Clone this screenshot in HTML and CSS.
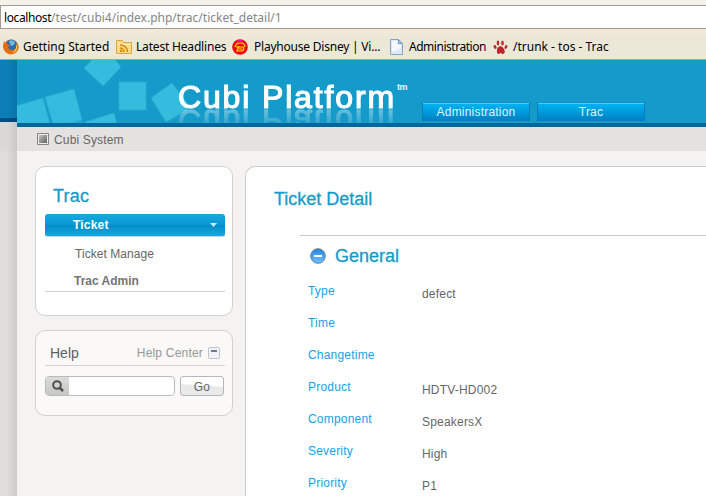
FILE: index.html
```html
<!DOCTYPE html>
<html lang="en">
<head>
<meta charset="utf-8">
<title>Cubi Platform</title>
<link rel="stylesheet" href="styles.css">
</head>
<body>
<div class="browser">
  <div class="url"><b>localhost</b><span>/test/cubi4/index.php/trac/ticket_detail/1</span></div>
  <nav class="bookmarks">
    <a class="bm bm-start"><svg width="16" height="16" viewBox="0 0 16 16"><circle cx="8" cy="8" r="7.5" fill="#e27a16"/><circle cx="8.3" cy="6.3" r="5.8" fill="#2b6cab"/><path d="M6 2q3-2 6 1l-1 3-3 1z" fill="#72b9dc"/><path d="M1 2l1 2 2-1 0 2 3 1-2 2 1 2q3 2 6 0 3-2 2-6 3 4 0 8-4 4-9 2-5-2-5-7z" fill="#e66b14"/><path d="M13 5q3 4-1 8l-3 1q5-3 4-9z" fill="#ffc84a"/></svg><span>Getting Started</span></a>
    <a class="bm bm-news"><svg width="16" height="16" viewBox="0 0 16 16"><path d="M.5 14.500V1.500h6l1 2h8v11z" fill="#fbdc83" stroke="#dba63d"/><path d="M1.500 5.500h13" stroke="#fff0b8"/><g fill="none" stroke="#d9861b" stroke-width="1.500"><path d="M4 9q3.500 0 4 4M4 6q7 0 7.500 7"/></g><circle cx="5" cy="12" r="1.200" fill="#d9861b"/></svg><span>Latest Headlines</span></a>
    <a class="bm bm-play"><svg width="16" height="16" viewBox="0 0 16 16"><circle cx="8" cy="8" r="7.800" fill="#ed0710"/><path d="M5 3l3-2 3 2" fill="none" stroke="#ed1bb0" stroke-width="1.500"/><path d="M3 8q1-4 5-4 5 0 5 4M4 8h7q2 2-1 4H5l2-5M7 10h3" fill="none" stroke="#ffe600" stroke-width="1.200"/></svg><span>Playhouse Disney | Vi...</span></a>
    <a class="bm bm-admin"><svg width="13" height="16" viewBox="0 0 13 16"><path d="M.5.500h8l4 4v11H.500z" fill="#dce9f9" stroke="#8ba3c2"/><path d="M2 2h5v4h4v3L2 13z" fill="#f5f9ff"/><path d="M8.500.500v4h4z" fill="#a9c9ec" stroke="#7e9cc0"/></svg><span>Administration</span></a>
    <a class="bm bm-trunk"><svg width="15" height="16" viewBox="0 0 15 16" fill="#bd252c"><path d="M4 11q0-3 3.500-4 3 1 4 4 1 4-2 4l-2-1-2 1q-2 0-1.500-4z"/><ellipse cx="5" cy="4" rx="1.300" ry="2.400"/><ellipse cx="9.500" cy="4" rx="1.300" ry="2.600"/><ellipse cx="2" cy="8" rx="1.400" ry="2" transform="rotate(-25 2 8)"/><ellipse cx="13" cy="8" rx="1.300" ry="2" transform="rotate(25 13 8)"/></svg><span>/trunk - tos - Trac</span></a>
  </nav>
</div>
<div class="page">
  <div class="gutter"></div>
  <div class="site">
    <header>
      <svg class="cubes" width="170" height="63" viewBox="0 0 170 63" fill="#33bcdd" stroke="#27b0d3" stroke-width=".8"><path d="M-1 46 26 38 33 64H-1zM28 37 57 29 65 60 37 68zM33 64l32-2 1 2zM68 62 97 53 100 64H68zM67 8 78-3H96L104 7 86 26zM102 22h27v28H102zM134 38 155 23 174 48 149 62z"/></svg>
      <div class="logo">Cubi Platform</div><sup>tm</sup>
      <nav class="tabs"><a>Administration</a><a>Trac</a></nav>
    </header>
    <div class="crumb"><svg width="12" height="12" viewBox="0 0 12 12"><defs><linearGradient id="sq" x2="1" y2="1"><stop stop-color="#c5c5c5"/><stop offset="1" stop-color="#606060"/></linearGradient></defs><path d="M.5.500h11v11H.500z" fill="#ecebea" stroke="#858585"/><path d="M2 2h8v8H2z" fill="url(#sq)"/></svg><span>Cubi System</span></div>
    <div class="content">
      <aside>
        <section class="panel menu">
          <h2>Trac</h2>
          <a class="active"><span>Ticket</span><svg width="7" height="4" viewBox="0 0 7 4"><path d="M0 0h7L3.500 4z" fill="#c9edfc"/></svg></a>
          <a class="sub">Ticket Manage</a>
          <a class="group">Trac Admin</a>
        </section>
        <section class="panel help">
          <div class="help-head"><h3>Help</h3><span>Help Center</span><svg width="12" height="12" viewBox="0 0 12 12"><rect x=".5" y=".5" width="11" height="11" rx="1.200" fill="#f0f3fa" stroke="#bfc2c8"/><path d="M3 3h6v2H3z" fill="#777c84"/></svg></div>
          <div class="search"><div class="field"><i><svg width="12" height="12" viewBox="0 0 12 12" fill="none" stroke="#50504e"><circle cx="5" cy="5" r="3.800" stroke-width="2"/><path d="M8 8l3 3" stroke-width="2.500"/></svg></i></div><div class="go">Go</div></div>
        </section>
      </aside>
      <main>
        <h1>Ticket Detail</h1>
        <div class="general">
          <div class="gen-head"><svg width="16" height="16" viewBox="0 0 16 16"><defs><linearGradient id="ball" x2="0" y2="1"><stop stop-color="#2384df"/><stop offset="1" stop-color="#73c0ff"/></linearGradient></defs><circle cx="8" cy="8" r="7.300" fill="url(#ball)" stroke="#657d98"/><path d="M4 7h8v2H4z" fill="#fff"/></svg><h2>General</h2></div>
          <dl>
            <dt>Type</dt><dd>defect</dd>
            <dt>Time</dt><dd></dd>
            <dt>Changetime</dt><dd></dd>
            <dt>Product</dt><dd>HDTV-HD002</dd>
            <dt>Component</dt><dd>SpeakersX</dd>
            <dt>Severity</dt><dd>High</dd>
            <dt>Priority</dt><dd>P1</dd>
          </dl>
        </div>
      </main>
    </div>
  </div>
</div>
</body>
</html>
```
FILE: styles.css
```css
* { box-sizing: border-box; }
body { margin: 0; width: 706px; height: 496px; overflow: hidden; font: 12px/16px "Liberation Sans", sans-serif; letter-spacing: .2px; color: #666; background: #f4f3f1; }
h1, h2, h3, dl, dd { margin: 0; font-weight: normal; }
svg { display: block; flex: none; }
.browser { height: 60px; padding-top: 5px; background: #f4f3ea; font-family: "Noto Sans", sans-serif; color: #000; letter-spacing: 0; }
.url { height: 24px; padding: 4px 3px 0; border: 1px solid #9f9d94; border-width: 1px 0 1px 1px; background: #fff; line-height: 16px; white-space: nowrap; }
.url b { font-weight: normal; letter-spacing: -.4px; }
.url span { color: #858585; letter-spacing: 0; }
.bookmarks { height: 31px; display: flex; align-items: center; padding: 6px 0 0 3px; border-bottom: 1px solid #aaa58f; background: linear-gradient(#f3e9d9, #ece8d8 30%); white-space: nowrap; }
.bm { display: flex; flex: none; align-items: center; gap: 4px; height: 16px; }
.bm-start { width: 113px; }
.bm-news { width: 116px; letter-spacing: -.18px; }
.bm-play { width: 158px; gap: 6px; letter-spacing: -.22px; }
.bm-admin { width: 103px; gap: 6px; letter-spacing: -.47px; }
.bm-trunk { gap: 5px; }
.page { display: flex; height: 436px; }
.gutter { width: 17px; background: linear-gradient(90deg, transparent 40%, rgba(0,0,0,.08)), linear-gradient(#0c7eb8 58px, #004f83 58px 62px, #dad9d7 62px 91px, #dedddc 91px); }
.site { width: 689px; }
header { position: relative; height: 67px; background: #149bc9; border-bottom: 4px solid #00669b; overflow: hidden; display: flex; }
.cubes { position: absolute; left: 0; top: 0; }
.logo { position: relative; width: 218px; height: 38px; margin: 18px 0 0 161px; font-size: 32px; line-height: 38px; letter-spacing: 1.85px; white-space: nowrap; color: #fff; -webkit-text-stroke: 1.2px #fff; -webkit-box-reflect: below -14px linear-gradient(transparent 25%, rgba(255,255,255,.5)); }
sup { margin: 22px 0 0 1px; width: 11px; font-size: 9px; line-height: 11px; letter-spacing: -.4px; font-weight: bold; color: #e9f8fd; }
.tabs { display: flex; gap: 7px; margin: 42px 0 0 14px; }
.tabs a { width: 108px; height: 19px; border: 1px solid #087fba; border-top-color: #148dc8; background: linear-gradient(#50ccff 1px, #00b1f2 1px, #0082c3); color: #ddf6ff; text-align: center; line-height: 18px; }
.crumb { height: 24px; padding-left: 20px; display: flex; align-items: center; gap: 5px; background: #e4e2e0; }
.crumb svg { margin-top: -1px; }
.crumb span { padding-top: 2px; letter-spacing: .15px; }
.content { height: 345px; padding: 15px 0 0 18px; display: flex; gap: 12px; background: #f4f3f1; }
aside { width: 198px; }
.panel { border: 1px solid #d0d0d0; border-radius: 10px; padding: 0 7px 0 9px; }
.menu { height: 150px; background: #fff; }
.menu h2 { height: 47px; padding: 19px 0 0 8px; font-size: 18px; line-height: 20px; color: #159bcb; -webkit-text-stroke: .3px #159bcb; }
.menu a { display: block; }
.menu .active { height: 23px; display: flex; align-items: center; justify-content: space-between; padding: 0 8px 0 28px; border-radius: 3px; border-bottom: 1px solid #bdd8e4; background: linear-gradient(#16a8df, #0899d3 48%, #078cc5 52%, #12a8e2); font-weight: bold; color: #fff; }
.menu .sub { height: 33px; padding: 9px 0 0 30px; letter-spacing: .05px; }
.menu .group { height: 22px; padding: 3px 0 0 29px; border-bottom: 1px solid #d0d0d0; font-weight: bold; color: #747474; letter-spacing: 0; }
.help { height: 86px; margin-top: 14px; background: #faf9f7; }
.help-head { height: 35px; padding: 10px 5px 0; display: flex; align-items: center; gap: 5px; border-bottom: 1px solid #d3d2d0; color: #969696; }
.help-head h3 { flex: 1; font-size: 14px; letter-spacing: 0; color: #5e5e5e; }
.search { display: flex; gap: 5px; margin-top: 10px; }
.field { width: 130px; height: 20px; border: 1px solid #bbb; border-radius: 4px; overflow: hidden; background: #fff; }
.field i { width: 23px; height: 18px; display: flex; align-items: center; justify-content: center; background: linear-gradient(#dcddda, #c6c7c2); }
.go { width: 44px; height: 20px; border: 1px solid #b7b7b7; border-radius: 3px; text-align: center; line-height: 20px; background: linear-gradient(184deg, #fff 45%, #e9e9e9 50%); }
main { flex: 1; height: 330px; overflow: hidden; border: 1px solid #cacaca; border-width: 1px 0 0 1px; border-radius: 10px 0 0; background: #fff; padding: 21px 0 0 28px; }
h1 { height: 47px; font-size: 18px; line-height: 22px; letter-spacing: 0; color: #159bcb; -webkit-text-stroke: .3px #159bcb; }
.general { margin-left: 26px; border-top: 1px solid #c8c8c8; }
.gen-head { display: flex; align-items: center; gap: 9px; height: 22px; margin: 9px 0 16px 10px; }
.gen-head svg { margin-top: -1px; }
.gen-head h2 { font-size: 18px; line-height: 22px; letter-spacing: 0; color: #159bcb; -webkit-text-stroke: .3px #159bcb; }
dl { display: grid; grid-template-columns: 114px 1fr; grid-template-rows: repeat(6, 32px) 20px; padding-left: 8px; }
dt { color: #12a3e8; }
dd { padding-top: 3px; }
```
